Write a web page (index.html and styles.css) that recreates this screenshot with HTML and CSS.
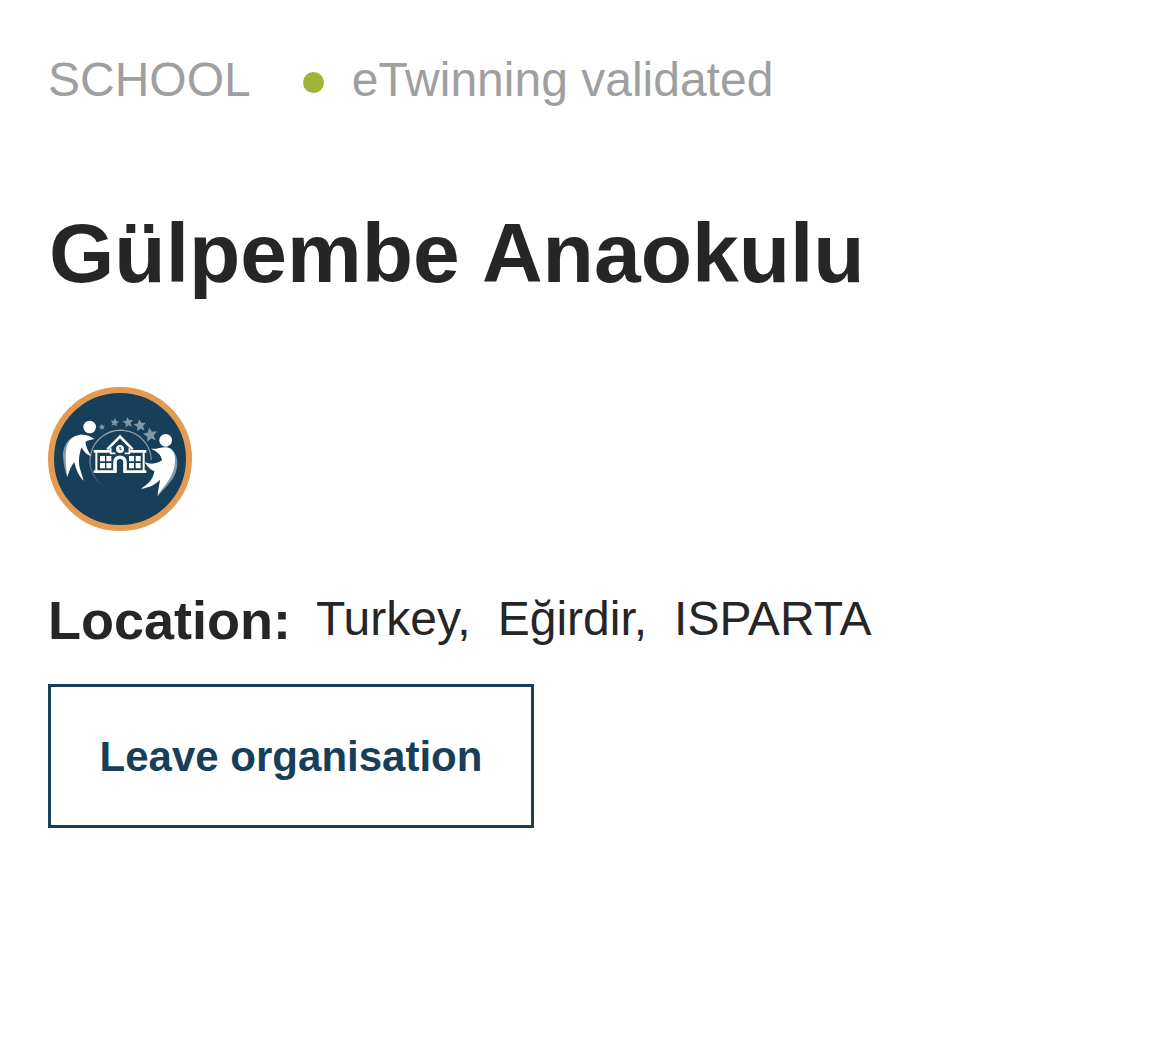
FILE: index.html
```html
<!DOCTYPE html>
<html lang="en">
<head>
    <meta charset="UTF-8">
    <meta name="viewport" content="width=device-width, initial-scale=1.0">
    <title>Gülpembe Anaokulu</title>
    <link rel="stylesheet" href="styles.css">
</head>
<body>
    <main class="organisation">
        <div class="meta">
            <span class="type">SCHOOL</span>
            <span class="status">eTwinning validated</span>
        </div>
        <h1>Gülpembe Anaokulu</h1>
        <svg class="badge" viewBox="24 21 432 432" role="img" aria-label="eTwinning School">
            <defs>
                <linearGradient id="ring" x1="0" y1="0" x2="0" y2="1">
                    <stop offset="0" stop-color="#8fa6b3"/>
                    <stop offset=".5" stop-color="#6f8b9c"/>
                    <stop offset="1" stop-color="#173f59"/>
                </linearGradient>
                <path id="star" d="M0-10 3-3.5 10-3 4.5 2 6 9 0 5.5-6 9-4.5 2-10-3-3-3.5Z"/>
            </defs>
            <circle cx="240" cy="237" r="207" fill="#173f59" stroke="#e49b51" stroke-width="18"/>
            <!-- ring -->
            <path d="M213 330A92 92 0 1 1 334 240" fill="none" stroke="url(#ring)" stroke-width="4"/>
            <!-- stars -->
            <g fill="#7f98a7">
                <use href="#star" transform="translate(186 141) rotate(-10) scale(1)"/>
                <use href="#star" transform="translate(224 127) rotate(8) scale(1.3)"/>
                <use href="#star" transform="translate(264 127) rotate(-8) scale(1.6)"/>
                <use href="#star" transform="translate(300 136) rotate(-8) scale(1.85)"/>
                <use href="#star" transform="translate(331 164) rotate(-10) scale(2.15)"/>
            </g>
            <!-- left person -->
            <path d="M130 164C91 163 69 192 69 226C70 253 75 272 81 290L103 230Z" fill="#8299a7"/>
            <g fill="#fff">
                <circle cx="149" cy="141" r="19"/>
                <path d="M163 177C137 157 104 161 88 183C73 205 76 246 82 291C87 272 94 257 103 246C108 270 117 289 131 303C126 281 116 263 117 242C118 221 122 211 124 202C132 217 142 226 154 228C145 215 138 202 136 186C145 180 154 179 163 177Z"/>
            </g>
            <!-- school -->
            <g fill="none" stroke="#fff">
                <path d="M202 208 240 170 278 208" stroke-width="8"/>
                <path d="M161 214H212M268 214H319M161 275H230M250 275H319" stroke-width="8"/>
                <path d="M169 214V275M311 214V275" stroke-width="6"/>
                <path d="M225 275V246C225 227 255 227 255 246V275" stroke-width="11"/>
                <path d="M212 205V220H226M268 205V220H254" stroke-width="5"/>
            </g>
            <g fill="#fff">
                <path d="M180 228h15v16h-15zM199 228h15v16h-15zM180 249h15v16h-15zM199 249h15v16h-15zM267 228h15v16h-15zM287 228h15v16h-15zM267 249h15v16h-15zM287 249h15v16h-15z"/>
                <circle cx="240" cy="207" r="12"/>
            </g>
            <path d="M240 200V208H245" fill="none" stroke="#173f59" stroke-width="3"/>
            <!-- right person -->
            <path d="M390 204C411 218 418 246 407 279C396 307 371 327 352 350L375 281Z" fill="#8299a7"/>
            <g fill="#fff">
                <circle cx="377" cy="181" r="19"/>
                <path d="M333 206C354 208 365 199 381 202C404 207 410 235 402 264C394 299 370 319 353 347C353 331 359 314 360 299C343 316 324 324 303 326C323 313 340 299 343 274C330 269 321 259 314 247C332 253 350 253 366 241C364 224 349 213 333 206Z"/>
            </g>
        </svg>
        <div class="location">
            <strong>Location:</strong>
            <span>Turkey,</span>
            <span>Eğirdir,</span>
            <span>ISPARTA</span>
        </div>
        <button class="leave">Leave organisation</button>
    </main>
</body>
</html>
```
FILE: styles.css
```css
* {
    box-sizing: border-box;
}
body {
    margin: 0;
    background: #fff;
    color: #262626;
    font-family: "Liberation Sans", Arial, sans-serif;
}
.organisation {
    padding: 48px;
}
.meta {
    display: flex;
    height: 64px;
    line-height: 64px;
    font-size: 48px;
    color: #9f9f9f;
}
.status {
    display: flex;
    align-items: center;
    margin-left: 52px;
}
.status::before {
    content: '';
    width: 21px;
    height: 21px;
    margin: 4px 28px 0 0;
    border-radius: 50%;
    background: #a0b43a;
}
h1 {
    margin: 91px 0 0;
    padding-left: 1px;
    font-size: 84px;
    line-height: 100px;
    word-spacing: 2px;
}
.badge {
    display: block;
    width: 144px;
    height: 144px;
    margin-top: 84px;
}
.location {
    display: flex;
    align-items: flex-start;
    gap: 27px;
    height: 64px;
    margin-top: 57px;
    font-size: 48px;
    line-height: 62px;
}
.location strong {
    margin-right: -2px;
    font-size: 54px;
    line-height: 64px;
}
.leave {
    display: block;
    width: 486px;
    height: 144px;
    margin-top: 32px;
    padding-top: 3px;
    border: 3px solid #173f59;
    background: #fff;
    color: #173f59;
    font: bold 42px "Liberation Sans", Arial, sans-serif;
}
```
